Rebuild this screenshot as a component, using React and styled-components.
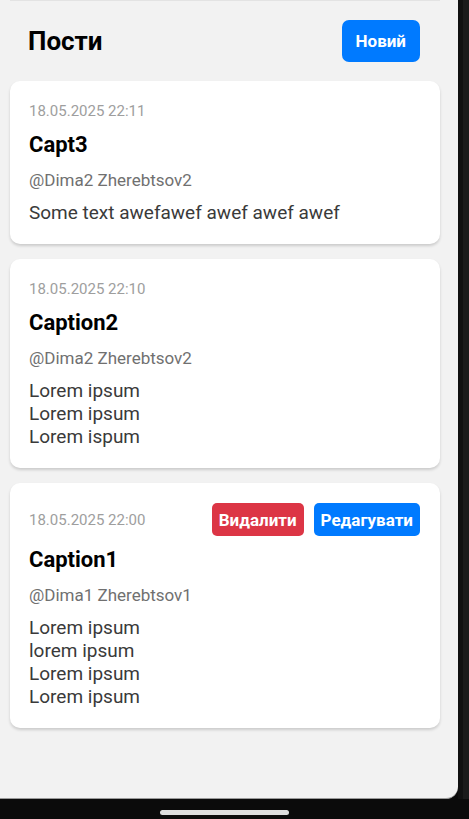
import React from 'react';
import styled, { createGlobalStyle } from 'styled-components';

const GlobalStyle = createGlobalStyle`
  html, body {
    margin: 0;
    padding: 0;
    background: #0b0b0b;
  }
  * {
    box-sizing: border-box;
  }
`;

const posts = [
  {
    id: 3,
    date: '18.05.2025 22:11',
    title: 'Capt3',
    author: '@Dima2 Zherebtsov2',
    lines: ['Some text awefawef awef awef awef'],
  },
  {
    id: 2,
    date: '18.05.2025 22:10',
    title: 'Caption2',
    author: '@Dima2 Zherebtsov2',
    lines: ['Lorem ipsum', 'Lorem ipsum', 'Lorem ispum'],
  },
  {
    id: 1,
    date: '18.05.2025 22:00',
    title: 'Caption1',
    author: '@Dima1 Zherebtsov1',
    lines: ['Lorem ipsum', 'lorem ipsum', 'Lorem ipsum', 'Lorem ipsum'],
    own: true,
  },
];

// рамка телефона
const Phone = styled.div`
  width: 469px;
  height: 819px;
  display: grid;
  grid-template-columns: 458px 1fr;
  grid-template-rows: 799px 1fr;
  background: #0b0b0b;
  overflow: hidden;
  font-family: Roboto, 'Liberation Sans', sans-serif;
`;

const Screen = styled.div`
  background: #f2f2f2;
  border-bottom: 1px solid #9a9a9a;
  border-bottom-right-radius: 12px;
  overflow: hidden;
  display: flex;
  flex-direction: column;
`;

const FrameEdge = styled.div`
  display: grid;
  grid-template-columns: 5px 1fr;
  &::before {
    content: '';
    background: #111;
  }
  &::after {
    content: '';
    background: #1b1b1b;
  }
`;

const BottomBar = styled.div`
  grid-column: 1 / 3;
  display: flex;
  align-items: flex-start;
  padding: 11px 0 0 160px;
`;

const HomeIndicator = styled.div`
  width: 129px;
  height: 5px;
  border-radius: 3px;
  background: #dedede;
`;

const TopEdge = styled.div`
  height: 1px;
  margin: 0 18px 0 10px;
  background: #e3e3e3;
`;

const Header = styled.div`
  display: flex;
  align-items: center;
  justify-content: space-between;
  padding: 19px 38px 19px 28px;
`;

const PageTitle = styled.h1`
  margin: 0;
  font-size: 26px;
  font-weight: 700;
  color: #000;
`;

const Button = styled.button`
  border: none;
  color: #fff;
  font-family: inherit;
  font-weight: 700;
  font-size: 17px;
  cursor: pointer;
  background: ${(p) => (p.$danger ? '#dc3545' : '#007aff')};
  height: ${(p) => (p.$big ? '42px' : '33px')};
  padding: ${(p) => (p.$big ? '0 14px' : '0 7px')};
  border-radius: ${(p) => (p.$big ? '7px' : '5px')};
`;

const List = styled.div`
  display: flex;
  flex-direction: column;
  gap: 15px;
  padding: 0 18px 0 10px;
`;

const Card = styled.div`
  background: #fff;
  border-radius: 10px;
  padding: 20px 20px 20px 19px;
  box-shadow: 0 2px 3px rgba(0, 0, 0, 0.16);
`;

const CardTop = styled.div`
  display: flex;
  align-items: center;
  justify-content: space-between;
`;

const DateText = styled.span`
  font-size: 15px;
  line-height: 20px;
  color: #9e9e9e;
`;

const Actions = styled.div`
  display: flex;
  gap: 10px;
`;

const Title = styled.div`
  margin-top: 11px;
  font-size: 22px;
  line-height: 26px;
  font-weight: 700;
  color: #000;
`;

const Author = styled.div`
  margin-top: 11px;
  font-size: 17px;
  line-height: 22px;
  color: #707070;
`;

const Body = styled.div`
  margin-top: 10px;
  font-size: 19px;
  line-height: 23px;
  color: #3a3a3a;
`;

const PostCard = ({ post }) => (
  <Card>
    <CardTop>
      <DateText>{post.date}</DateText>
      {post.own && (
        <Actions>
          <Button $danger>Видалити</Button>
          <Button>Редагувати</Button>
        </Actions>
      )}
    </CardTop>
    <Title>{post.title}</Title>
    <Author>{post.author}</Author>
    <Body>
      {post.lines.map((line, i) => (
        <div key={i}>{line}</div>
      ))}
    </Body>
  </Card>
);

export default function App() {
  return (
    <>
      <GlobalStyle />
      <Phone>
        <Screen>
          <TopEdge />
          <Header>
            <PageTitle>Пости</PageTitle>
            <Button $big>Новий</Button>
          </Header>
          <List>
            {posts.map((post) => (
              <PostCard key={post.id} post={post} />
            ))}
          </List>
        </Screen>
        <FrameEdge />
        <BottomBar>
          <HomeIndicator />
        </BottomBar>
      </Phone>
    </>
  );
}
